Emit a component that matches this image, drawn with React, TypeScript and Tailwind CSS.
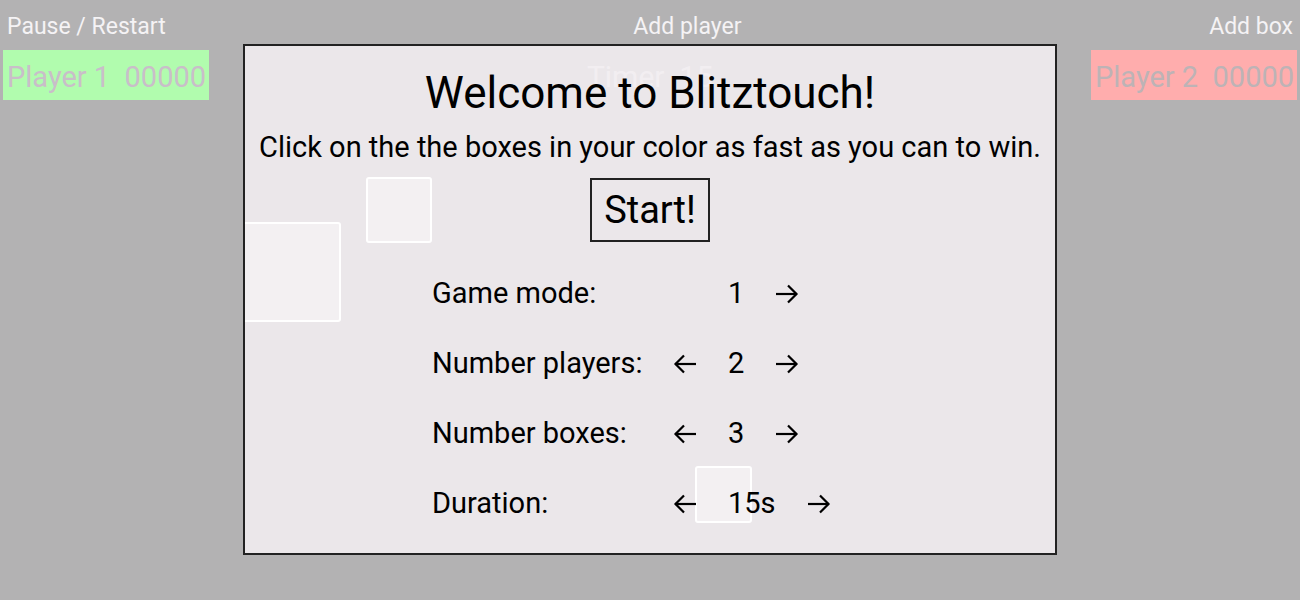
const rows = [
  { label: "Game mode:", value: "1", left: false },
  { label: "Number players:", value: "2", left: true },
  { label: "Number boxes:", value: "3", left: true },
  { label: "Duration:", value: "15s", left: true },
];

const Arrow = ({ dir }: { dir: "left" | "right" }) => (
  <svg
    width="24"
    height="20"
    viewBox="0 0 24 20"
    fill="none"
    stroke="currentColor"
    strokeWidth="2.2"
    strokeLinecap="butt"
    strokeLinejoin="miter"
    className={dir === "left" ? "-scale-x-100" : ""}
  >
    <path d="M1 10h21" />
    <path d="M13 1.5 21.5 10 13 18.5" />
  </svg>
);

const App = () => {
  return (
    <div
      className="relative w-full h-[600px] bg-[#b3b2b3] overflow-hidden"
      style={{ fontFamily: "Roboto, 'Liberation Sans', sans-serif" }}
    >
      {/* Top controls */}
      <div className="flex justify-between px-[3px]">
        <button className="h-[52px] pt-[3px] px-[4px] text-[23px] text-[#f5f3f5]">
          Pause / Restart
        </button>
        <button className="h-[52px] pt-[3px] text-[23px] text-[#f5f3f5]">
          Add player
        </button>
        <button className="h-[52px] pt-[3px] px-[4px] text-[23px] text-[#f5f3f5]">
          Add box
        </button>
      </div>

      {/* Scores + timer */}
      <div className="flex justify-between items-center px-[3px] -mt-[2px]">
        <div className="w-[206px] h-[50px] bg-[#b1fcae] flex items-center pt-[6px] px-[4px] text-[29px] text-[#c9bec9] whitespace-pre">
          Player 1  00000
        </div>
        <div className="pt-[2px] text-[30px] text-white whitespace-pre">Timer  15</div>
        <div className="w-[206px] h-[50px] bg-[#ffadad] flex items-center pt-[6px] px-[4px] text-[29px] text-[#bdb3b6] whitespace-pre">
          Player 2  00000
        </div>
      </div>

      {/* Welcome modal */}
      <div className="absolute left-[243px] top-[44px] w-[814px] h-[511px] border-2 border-[#222] bg-[#f1ecf0]/90 overflow-hidden">
        {/* boxes */}
        <div className="absolute left-[-4px] top-[176px] w-[100px] h-[100px] rounded-[3px] border-2 border-white bg-white/40" />
        <div className="absolute left-[121px] top-[131px] w-[66px] h-[66px] rounded-[3px] border-2 border-white bg-white/40" />
        <div className="absolute left-[450px] top-[420px] w-[57px] h-[57px] rounded-[3px] border-2 border-white bg-white/40" />

        <div className="relative z-10 flex flex-col items-center text-black">
          <h1 className="mt-[21px] text-[44px] leading-[52px]">
            Welcome to Blitztouch!
          </h1>
          <p className="mt-[6px] text-[29px] leading-[44px]">
            Click on the the boxes in your color as fast as you can to win.
          </p>
          <button className="mt-[9px] w-[120px] h-[64px] border-2 border-[#222] text-[38px]">
            Start!
          </button>
          <div className="self-start ml-[187px] mt-[17px] flex flex-col">
            {rows.map((r) => (
              <div key={r.label} className="h-[70px] flex items-center text-[29px]">
                <span className="w-[241px]">{r.label}</span>
                <span className="w-[24px]">{r.left && <Arrow dir="left" />}</span>
                <span className="mx-[31px]">{r.value}</span>
                <Arrow dir="right" />
              </div>
            ))}
          </div>
        </div>
      </div>
    </div>
  );
};

export default App;
